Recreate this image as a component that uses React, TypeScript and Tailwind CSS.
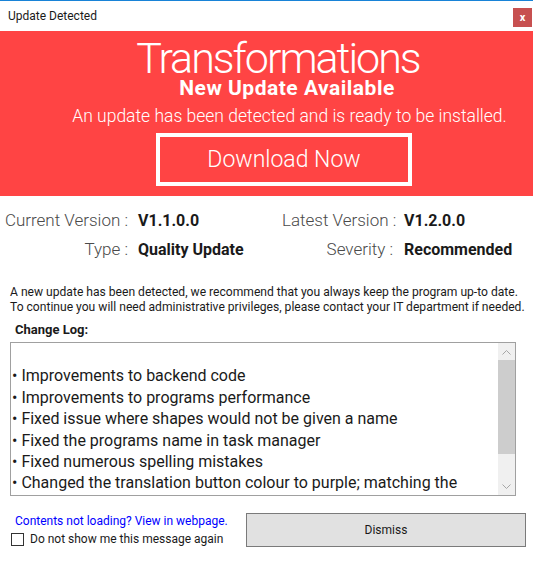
import { useState } from 'react';

const CHANGES = [
  'Improvements to backend code',
  'Improvements to programs performance',
  'Fixed issue where shapes would not be given a name',
  'Fixed the programs name in task manager',
  'Fixed numerous spelling mistakes',
  'Changed the translation button colour to purple; matching the',
];

function Chevron({ up }: { up?: boolean }) {
  return (
    <svg width="9" height="6" viewBox="0 0 9 6" fill="none" stroke="#a6a6a6" strokeWidth="1">
      {up ? <path d="M0.5 5.5 L4.5 1.5 L8.5 5.5" /> : <path d="M0.5 0.5 L4.5 4.5 L8.5 0.5" />}
    </svg>
  );
}

export default function App() {
  const [hide, setHide] = useState(false);

  return (
    <div className="w-[533px] h-[562px] bg-white border-t border-[#1883d7] font-['Roboto',sans-serif] text-[#1a1a1a] overflow-hidden whitespace-nowrap">
      {/* Title bar */}
      <div className="h-[30px] flex items-start justify-between">
        <div className="pl-2 pt-[7px] text-[12px] leading-[16px]">Update Detected</div>
        <button className="mt-[7px] mr-[1px] w-[19px] h-[19px] bg-[#c75050] text-white text-[11px] font-bold leading-none flex items-center justify-center">
          x
        </button>
      </div>

      {/* Banner */}
      <div className="h-[165px] bg-[#ff4444] text-white flex flex-col items-center pt-[7px]">
        <div className="ml-[23px] text-[43px] leading-[40px] font-light tracking-[-2px]">Transformations</div>
        <div className="ml-[41px] text-[21px] leading-[20px] font-bold tracking-[0.5px]">New Update Available</div>
        <div className="ml-[46px] mt-[6px] text-[17.5px] leading-[24px] font-light">
          An update has been detected and is ready to be installed.
        </div>
        <button className="ml-[35px] mt-[5px] w-[256px] h-[53px] border-4 border-white text-[23px] font-light leading-none">
          Download Now
        </button>
      </div>

      {/* Version info */}
      <div className="pt-[13px] flex flex-col gap-[6px]">
        <div className="flex items-baseline">
          <div className="w-[128px] text-right text-[17px] leading-[22px] font-light text-[#4a4a4a]">Current Version :</div>
          <div className="ml-[10px] w-[144px] text-[16px] leading-[22px] font-bold">V1.1.0.0</div>
          <div className="w-[111px] text-right text-[17px] leading-[22px] font-light text-[#4a4a4a]">Latest Version :</div>
          <div className="ml-[11px] text-[16px] leading-[22px] font-bold">V1.2.0.0</div>
        </div>
        <div className="flex items-baseline">
          <div className="w-[128px] text-right text-[17px] leading-[22px] font-light text-[#4a4a4a]">Type :</div>
          <div className="ml-[10px] w-[144px] text-[16px] leading-[22px] font-bold">Quality Update</div>
          <div className="w-[111px] text-right text-[17px] leading-[22px] font-light text-[#4a4a4a]">Severity :</div>
          <div className="ml-[11px] text-[16px] leading-[22px] font-bold">Recommended</div>
        </div>
      </div>

      {/* Notice */}
      <div className="pl-[10px] mt-[24px] text-[12.1px] leading-[15px]">
        <p>A new update has been detected, we recommend that you always keep the program up-to date.</p>
        <p>To continue you will need administrative privileges, please contact your IT department if needed.</p>
      </div>
      <div className="pl-[15px] mt-[6px] text-[13px] leading-[17px] font-bold">Change Log:</div>

      {/* Change log box */}
      <div className="ml-[10px] mt-[4px] w-[506px] h-[154px] border border-[#a0a0a0] flex">
        <div className="flex-1 overflow-hidden pt-[1px] pl-[1px] text-[16px] leading-[21.4px]">
          <div>&nbsp;</div>
          {CHANGES.map((c) => (
            <div key={c}>• {c}</div>
          ))}
        </div>
        <div className="w-[17px] bg-[#f0f0f0] flex flex-col">
          <div className="h-[17px] flex items-center justify-center"><Chevron up /></div>
          <div className="h-[94px] bg-[#cdcdcd]" />
          <div className="flex-1" />
          <div className="h-[17px] flex items-center justify-center"><Chevron /></div>
        </div>
      </div>

      {/* Footer */}
      <div className="flex mt-[17px]">
        <div className="w-[246px] flex flex-col">
          <a className="pl-[15px] text-[12px] leading-[16px] text-[#0000ff] cursor-pointer">Contents not loading? View in webpage.</a>
          <label className="pl-[11px] mt-[2px] flex items-center gap-[6px] text-[12px] leading-[16px]">
            <input type="checkbox" checked={hide} onChange={(e) => setHide(e.target.checked)}
              className="appearance-none w-[13px] h-[13px] border border-[#333] bg-white m-0" />
            Do not show me this message again
          </label>
        </div>
        <button className="w-[280px] h-[34px] bg-[#e1e1e1] border border-[#7a7a7a] text-[12px]">Dismiss</button>
      </div>
    </div>
  );
}
